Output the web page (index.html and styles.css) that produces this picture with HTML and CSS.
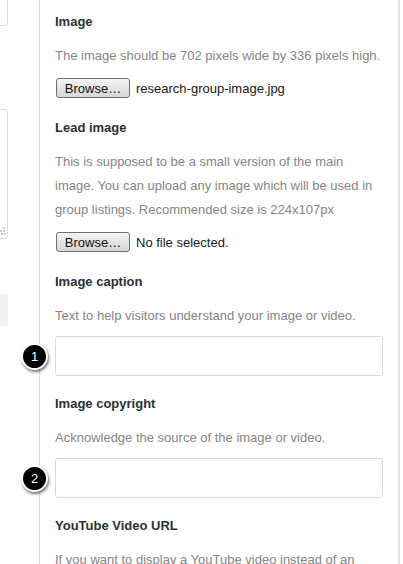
FILE: index.html
```html
<!DOCTYPE html>
<html>
<head>
<meta charset="utf-8">
<link rel="stylesheet" href="styles.css">
</head>
<body>
<div class="page">
  <div class="side">
    <div class="stub stub-top"></div>
    <div class="stub stub-area">
      <svg class="grip" width="8" height="10" viewBox="0 0 8 10">
        <g fill="#c8c8c8">
          <rect x="5" y="0" width="2" height="2"/>
          <rect x="2" y="3" width="2" height="2"/>
          <rect x="5" y="3" width="2" height="2"/>
          <rect x="0" y="6" width="2" height="2"/>
          <rect x="3" y="6" width="2" height="2"/>
          <rect x="6" y="6" width="2" height="2"/>
        </g>
      </svg>
    </div>
    <div class="stub stub-gray"></div>
  </div>
  <div class="main">
    <div class="field field-file">
      <div class="label">Image</div>
      <p class="desc">The image should be 702 pixels wide by 336 pixels high.</p>
      <div class="file-row"><span class="browse">Browse…</span><span class="fname">research-group-image.jpg</span></div>
    </div>
    <div class="field field-file">
      <div class="label">Lead image</div>
      <p class="desc">This is supposed to be a small version of the main image. You can upload any image which will be used in group listings. Recommended size is 224x107px</p>
      <div class="file-row"><span class="browse">Browse…</span><span class="fname">No file selected.</span></div>
    </div>
    <div class="field field-text">
      <div class="label">Image caption</div>
      <p class="desc">Text to help visitors understand your image or video.</p>
      <div class="input-wrap"><span class="badge">1</span><div class="input"></div></div>
    </div>
    <div class="field field-text">
      <div class="label">Image copyright</div>
      <p class="desc">Acknowledge the source of the image or video.</p>
      <div class="input-wrap"><span class="badge">2</span><div class="input"></div></div>
    </div>
    <div class="field">
      <div class="label">YouTube Video URL</div>
      <p class="desc">If you want to display a YouTube video instead of an image, paste the URL here.</p>
    </div>
  </div>
</div>
</body>
</html>
```
FILE: styles.css
```css
html, body {
  margin: 0;
  padding: 0;
  background: #fff;
  overflow: hidden;
}
body {
  font-family: "Liberation Sans", Arial, sans-serif;
  font-size: 13px;
  width: 403px;
  height: 564px;
}
.page {
  display: flex;
  height: 564px;
  overflow: hidden;
}
.side {
  width: 39px;
  flex: none;
  overflow: hidden;
}
.stub {
  box-sizing: border-box;
  width: 38px;
  margin-left: -30px;
  border: 1px solid #dedede;
  border-radius: 3px;
  background: #fff;
}
.stub-top {
  margin-top: -10px;
  height: 36px;
}
.stub-area {
  margin-top: 83px;
  height: 130px;
  position: relative;
}
.grip {
  position: absolute;
  right: 1px;
  bottom: 1px;
}
.stub-gray {
  margin-top: 55px;
  height: 32px;
  border: none;
  border-radius: 0;
  background: #f1f1f1;
}
.main {
  box-sizing: border-box;
  width: 361px;
  flex: none;
  border-left: 1px solid #dcdcdc;
  border-right: 2px solid #e4e4e4;
  padding: 12px 15px 0 15px;
}
.field {
  margin-bottom: 20px;
}
.field-text {
  margin-bottom: 18px;
}
.label {
  font-weight: bold;
  color: #28313b;
  line-height: 20px;
  font-size: 13px;
}
.desc {
  margin: 12px 0 10px 0;
  color: #858585;
  line-height: 24px;
}
.field-text .desc {
  margin-bottom: 8px;
}
.file-row {
  display: flex;
  align-items: center;
  height: 20px;
}
.browse {
  box-sizing: border-box;
  display: inline-flex;
  align-items: center;
  justify-content: center;
  width: 74px;
  height: 20px;
  margin-left: 1px;
  border: 1px solid #707070;
  border-radius: 3px;
  background: linear-gradient(#f6f6f6, #e4e4e4 50%, #d6d6d6);
  color: #111;
  font-size: 13px;
}
.fname {
  margin-left: 6px;
  color: #1a1a1a;
}
.input-wrap {
  position: relative;
}
.input {
  box-sizing: border-box;
  height: 40px;
  border: 1px solid #dadada;
  border-radius: 3px;
  background: #fff;
}
.badge {
  position: absolute;
  left: -34px;
  top: 7px;
  box-sizing: border-box;
  width: 27px;
  height: 27px;
  border-radius: 50%;
  background: #000;
  border: 2px solid #fff;
  box-shadow: 1px 2px 3px rgba(0,0,0,0.55);
  color: #fff;
  font-size: 13px;
  display: flex;
  align-items: center;
  justify-content: center;
  z-index: 2;
}
```
